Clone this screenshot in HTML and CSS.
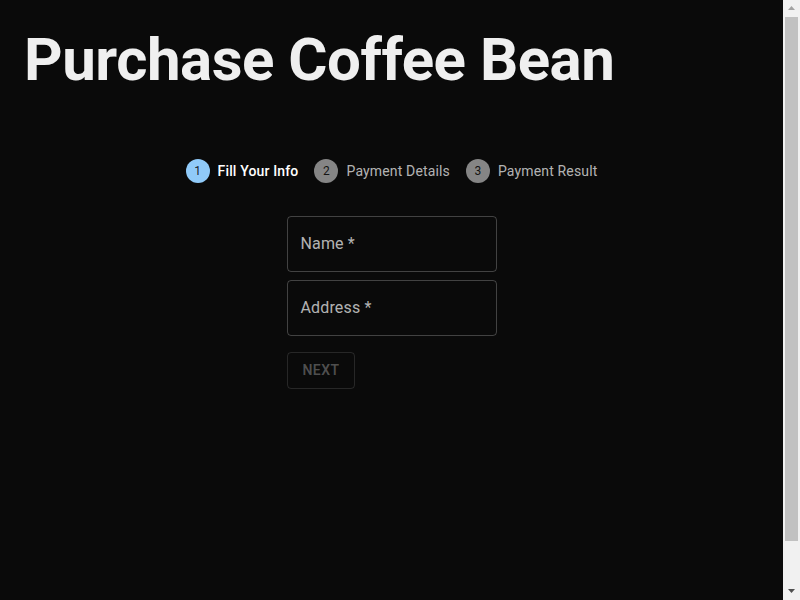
FILE: index.html
```html
<!DOCTYPE html>
<html lang="en">
<head>
<meta charset="utf-8">
<title>Purchase Coffee Bean</title>
<link rel="stylesheet" href="styles.css">
</head>
<body>
<div class="window">
  <main class="page">
    <h1 class="title">Purchase Coffee Bean</h1>
    <ol class="stepper">
      <li class="step step-active"><span class="step-icon">1</span><span class="step-label">Fill Your Info</span></li>
      <li class="step"><span class="step-icon">2</span><span class="step-label">Payment Details</span></li>
      <li class="step"><span class="step-icon">3</span><span class="step-label">Payment Result</span></li>
    </ol>
    <form class="form">
      <label class="field"><span class="field-label">Name *</span><input class="field-input" type="text"></label>
      <label class="field"><span class="field-label">Address *</span><input class="field-input" type="text"></label>
      <div class="actions"><button class="btn" type="button" disabled>Next</button></div>
    </form>
  </main>
  <div class="scrollbar" aria-hidden="true">
    <div class="sb-btn"><svg width="17" height="17" viewBox="0 0 17 17"><polygon points="5,10 12,10 8.5,6" class="sb-arrow-up"/></svg></div>
    <div class="sb-track"><div class="sb-thumb"></div></div>
    <div class="sb-btn"><svg width="17" height="17" viewBox="0 0 17 17"><polygon points="5,6 12,6 8.5,10" class="sb-arrow-down"/></svg></div>
  </div>
</div>
</body>
</html>
```
FILE: styles.css
```css
html, body {
  margin: 0;
  padding: 0;
  background: #0a0a0a;
  height: 100%;
  overflow: hidden;
}
body {
  font-family: Roboto, "Liberation Sans", sans-serif;
  color: #ffffff;
}
.window {
  display: flex;
  height: 100vh;
}
.page {
  flex: 1;
  min-width: 0;
  padding: 24px;
  display: flex;
  flex-direction: column;
}
.title {
  margin: 0;
  font-size: 60px;
  line-height: 72px;
  font-weight: 700;
  letter-spacing: -0.5px;
  color: #efefef;
  white-space: nowrap;
}
.stepper {
  list-style: none;
  margin: 63px 0 0;
  padding: 0;
  display: flex;
  justify-content: center;
}
.step {
  display: flex;
  align-items: center;
  padding: 0 8px;
  height: 24px;
}
.step-icon {
  width: 24px;
  height: 24px;
  border-radius: 50%;
  background: rgba(255,255,255,0.5);
  color: rgba(0,0,0,0.87);
  font-size: 12px;
  line-height: 24px;
  text-align: center;
  margin-right: 8px;
}
.step-label {
  font-size: 14px;
  line-height: 20px;
  letter-spacing: 0.15px;
  color: rgba(255,255,255,0.7);
}
.step-active .step-icon {
  background: #90caf9;
}
.step-active .step-label {
  color: #ffffff;
  font-weight: 500;
}
.form {
  margin: 33px auto 0;
  width: 210px;
  display: flex;
  flex-direction: column;
  gap: 8px;
}
.field {
  position: relative;
  display: block;
  height: 56px;
  border: 1px solid rgba(255,255,255,0.23);
  border-radius: 4px;
  box-sizing: border-box;
}
.field-label {
  position: absolute;
  left: 13px;
  top: 15px;
  font-size: 16px;
  line-height: 23px;
  letter-spacing: 0.15px;
  color: rgba(255,255,255,0.7);
}
.field-input {
  width: 100%;
  height: 100%;
  box-sizing: border-box;
  background: transparent;
  border: 0;
  outline: none;
  padding: 0 14px;
  color: #fff;
  font: inherit;
}
.actions {
  margin-top: 8px;
  display: flex;
}
.btn {
  font-family: Roboto, "Liberation Sans", sans-serif;
  font-size: 14px;
  font-weight: 500;
  line-height: 24.5px;
  letter-spacing: 0.4px;
  text-transform: uppercase;
  padding: 5px 15px;
  border: 1px solid rgba(255,255,255,0.12);
  border-radius: 4px;
  background: transparent;
  color: rgba(255,255,255,0.3);
}
.scrollbar {
  width: 17px;
  flex: none;
  background: #f1f1f1;
  display: flex;
  flex-direction: column;
}
.sb-btn {
  height: 17px;
  flex: none;
}
.sb-btn svg {
  display: block;
}
.sb-arrow-up {
  fill: #a3a3a3;
}
.sb-arrow-down {
  fill: #505050;
}
.sb-track {
  flex: 1;
  padding: 0 2px;
}
.sb-thumb {
  height: 524px;
  background: #c1c1c1;
}
```
